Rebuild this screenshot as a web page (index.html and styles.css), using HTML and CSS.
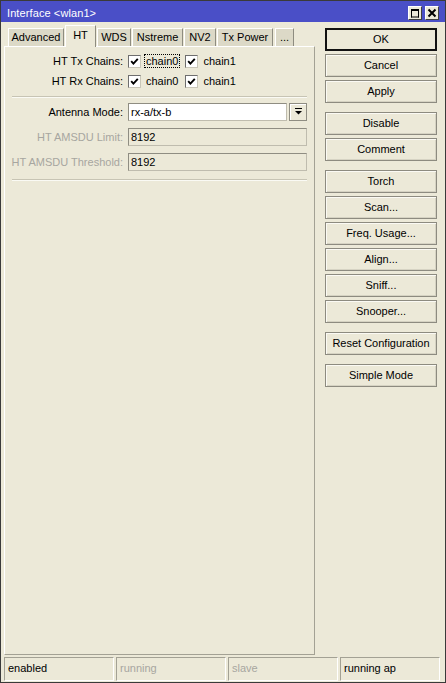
FILE: index.html
```html
<!DOCTYPE html>
<html>
<head>
<meta charset="utf-8">
<title>Interface &lt;wlan1&gt;</title>
<link rel="stylesheet" href="styles.css">
</head>
<body>
<div class="window">
  <div class="titlebar">
    <span class="title">Interface &lt;wlan1&gt;</span>
    <div class="caption-buttons">
      <span class="cap-btn">
        <svg width="12" height="12" viewBox="0 0 12 12"><path d="M2 2.5H10M2 3.5H10M2.5 2V10.5M9.5 2V10.5M2 10H10" stroke="#000" stroke-width="1" fill="none"/></svg>
      </span>
      <span class="cap-btn">
        <svg width="12" height="12" viewBox="0 0 12 12"><path d="M2.5 2.5L9.5 9.5M9.5 2.5L2.5 9.5" stroke="#000" stroke-width="2" fill="none"/></svg>
      </span>
    </div>
  </div>

  <div class="main">
    <div class="tabs-area">
      <div class="tabs">
        <span class="tab tab-advanced">Advanced</span>
        <span class="tab tab-ht active">HT</span>
        <span class="tab tab-wds">WDS</span>
        <span class="tab tab-nstreme">Nstreme</span>
        <span class="tab tab-nv2">NV2</span>
        <span class="tab tab-txpower">Tx Power</span>
        <span class="tab tab-more">...</span>
      </div>

      <div class="panel">
        <div class="row row-check first">
          <span class="lbl">HT Tx Chains:</span>
          <span class="chk">
            <span class="box"><svg width="9" height="9" viewBox="0 0 9 9"><polyline points="1.2,4.2 3.4,6.6 7.8,1.8" stroke="#000" stroke-width="1.9" fill="none"/></svg></span>
            <span class="chk-text focused">chain0</span>
          </span>
          <span class="chk">
            <span class="box"><svg width="9" height="9" viewBox="0 0 9 9"><polyline points="1.2,4.2 3.4,6.6 7.8,1.8" stroke="#000" stroke-width="1.9" fill="none"/></svg></span>
            <span class="chk-text">chain1</span>
          </span>
        </div>
        <div class="row row-check">
          <span class="lbl">HT Rx Chains:</span>
          <span class="chk">
            <span class="box"><svg width="9" height="9" viewBox="0 0 9 9"><polyline points="1.2,4.2 3.4,6.6 7.8,1.8" stroke="#000" stroke-width="1.9" fill="none"/></svg></span>
            <span class="chk-text">chain0</span>
          </span>
          <span class="chk">
            <span class="box"><svg width="9" height="9" viewBox="0 0 9 9"><polyline points="1.2,4.2 3.4,6.6 7.8,1.8" stroke="#000" stroke-width="1.9" fill="none"/></svg></span>
            <span class="chk-text">chain1</span>
          </span>
        </div>

        <div class="sep"></div>

        <div class="row row-field field-first">
          <span class="lbl">Antenna Mode:</span>
          <span class="input select">rx-a/tx-b</span>
          <span class="drop-btn">
            <svg width="9" height="9" viewBox="0 0 9 9"><rect x="1" y="0" width="7" height="1" fill="#000"/><path d="M1 3H8L4.5 6.5Z" fill="#000"/></svg>
          </span>
        </div>
        <div class="row row-field">
          <span class="lbl disabled">HT AMSDU Limit:</span>
          <span class="input readonly">8192</span>
        </div>
        <div class="row row-field">
          <span class="lbl disabled">HT AMSDU Threshold:</span>
          <span class="input readonly">8192</span>
        </div>

        <div class="sep sep-bottom"></div>
      </div>
    </div>

    <div class="buttons">
      <div class="btn-group">
        <span class="btn default">OK</span>
        <span class="btn">Cancel</span>
        <span class="btn">Apply</span>
      </div>
      <div class="btn-group">
        <span class="btn">Disable</span>
        <span class="btn">Comment</span>
      </div>
      <div class="btn-group">
        <span class="btn">Torch</span>
        <span class="btn">Scan...</span>
        <span class="btn">Freq. Usage...</span>
        <span class="btn">Align...</span>
        <span class="btn">Sniff...</span>
        <span class="btn">Snooper...</span>
      </div>
      <div class="btn-group">
        <span class="btn">Reset Configuration</span>
      </div>
      <div class="btn-group">
        <span class="btn">Simple Mode</span>
      </div>
    </div>
  </div>

  <div class="statusbar">
    <span class="cell">enabled</span>
    <span class="cell dim">running</span>
    <span class="cell dim">slave</span>
    <span class="cell">running ap</span>
  </div>
</div>
</body>
</html>
```

FILE: styles.css
```css
* {
  box-sizing: border-box;
}

html, body {
  margin: 0;
  padding: 0;
  background: #ece9d8;
}

body {
  font-family: "Liberation Sans", Arial, sans-serif;
  font-size: 11px;
  color: #000;
}

.window {
  width: 446px;
  height: 683px;
  border: 1px solid #3a3a3a;
  background: #ece9d8;
  display: flex;
  flex-direction: column;
}

/* ---- title bar ---- */
.titlebar {
  height: 21px;
  flex: none;
  background: #4a4fc7;
  color: #fff;
  display: flex;
  justify-content: space-between;
  align-items: flex-start;
  padding: 0 6px 0 6px;
}

.title {
  margin-top: 6px;
  line-height: 13px;
  letter-spacing: 0.1px;
}

.caption-buttons {
  display: flex;
  gap: 3px;
  margin-top: 5px;
}

.cap-btn {
  width: 14px;
  height: 14px;
  background: #ece9d8;
  border: 1px solid;
  border-color: #fff #404040 #404040 #fff;
  display: flex;
  align-items: center;
  justify-content: center;
}

.cap-btn svg {
  display: block;
}

/* ---- body ---- */
.main {
  flex: 1;
  min-height: 0;
  display: flex;
  padding-left: 3px;
}

.tabs-area {
  width: 311px;
  flex: none;
  display: flex;
  flex-direction: column;
}

.tabs {
  height: 24px;
  flex: none;
  display: flex;
  align-items: flex-end;
  padding-left: 4px;
  position: relative;
  z-index: 1;
}

.tab {
  height: 18px;
  margin-right: 1px;
  background: #dcd9c7;
  border-top: 1px solid #fff;
  border-left: 1px solid #fff;
  border-right: 1px solid #8e8c80;
  text-align: center;
  line-height: 16px;
  white-space: nowrap;
}

.tab.active {
  height: 22px;
  margin-bottom: -1px;
  background: #ece9d8;
  line-height: 18px;
}

.tab-advanced { width: 56px; }
.tab-ht       { width: 31px; }
.tab-wds      { width: 34px; }
.tab-nstreme  { width: 51px; }
.tab-nv2      { width: 32px; }
.tab-txpower  { width: 56px; margin-right: 2px; }
.tab-more     { width: 19px; }

.panel {
  flex: 1;
  border: 1px solid;
  border-color: #fff #a3a194 #a3a194 #fff;
  display: flex;
  flex-direction: column;
  padding-top: 4px;
}

.row {
  display: flex;
  align-items: center;
}

.row-check {
  height: 20px;
}

.lbl {
  width: 118px;
  flex: none;
  text-align: right;
  margin-right: 5px;
  white-space: nowrap;
}

.lbl.disabled {
  color: #a7a6a0;
}

.chk {
  display: flex;
  align-items: center;
  margin-right: 5px;
}

.box {
  width: 13px;
  height: 13px;
  background: #fff;
  border: 1px solid;
  border-color: #6e6e6e #c9c6b8 #c9c6b8 #6e6e6e;
  display: flex;
  align-items: center;
  justify-content: center;
}

.box svg {
  display: block;
}

.chk-text {
  margin-left: 3px;
  padding: 0 1px;
  line-height: 12px;
  border: 1px dotted transparent;
}

.chk-text.focused {
  border-color: #000;
}

.sep {
  height: 2px;
  margin: 5px 7px 0 7px;
  border-top: 1px solid #c7c4b4;
  border-bottom: 1px solid #fafaf4;
}

.sep-bottom {
  margin-top: 8px;
}

.row-field {
  height: 18px;
  margin-top: 7px;
}

.row-field.field-first {
  margin-top: 5px;
}

.input {
  height: 18px;
  border: 1px solid;
  border-color: #8f8d82 #bfbcae #bfbcae #8f8d82;
  padding-left: 2px;
  line-height: 16px;
  white-space: nowrap;
}

.input.select {
  width: 159px;
  background: #fff;
}

.input.readonly {
  width: 179px;
  background: #ece9d8;
}

.drop-btn {
  width: 18px;
  height: 18px;
  margin-left: 2px;
  background: #ece9d8;
  border: 1px solid #8f8d82;
  box-shadow: inset 1px 1px 0 #fff;
  display: flex;
  align-items: center;
  justify-content: center;
}

.drop-btn svg {
  display: block;
}

/* ---- command buttons ---- */
.buttons {
  width: 112px;
  flex: none;
  margin-left: 10px;
  padding-top: 6px;
  display: flex;
  flex-direction: column;
  gap: 9px;
}

.btn-group {
  display: flex;
  flex-direction: column;
  gap: 3px;
}

.btn {
  height: 23px;
  border: 1px solid #8d8b80;
  box-shadow: inset 1px 1px 0 #fbfaf4, inset -1px -1px 0 #d6d3c3;
  background: #ece9d8;
  text-align: center;
  line-height: 21px;
  white-space: nowrap;
}

.btn.default {
  border: 2px solid #111;
  line-height: 19px;
  box-shadow: none;
}

/* ---- status bar ---- */
.statusbar {
  flex: none;
  height: 25px;
  margin-top: 2px;
  padding: 0 5px 1px 3px;
  display: grid;
  grid-template-columns: 110px 110px 110px 1fr;
  column-gap: 2px;
}

.cell {
  border: 1px solid;
  border-color: #a3a194 #fff #fff #a3a194;
  padding-left: 3px;
  line-height: 20px;
  white-space: nowrap;
}

.cell.dim {
  color: #a7a6a0;
}
```
